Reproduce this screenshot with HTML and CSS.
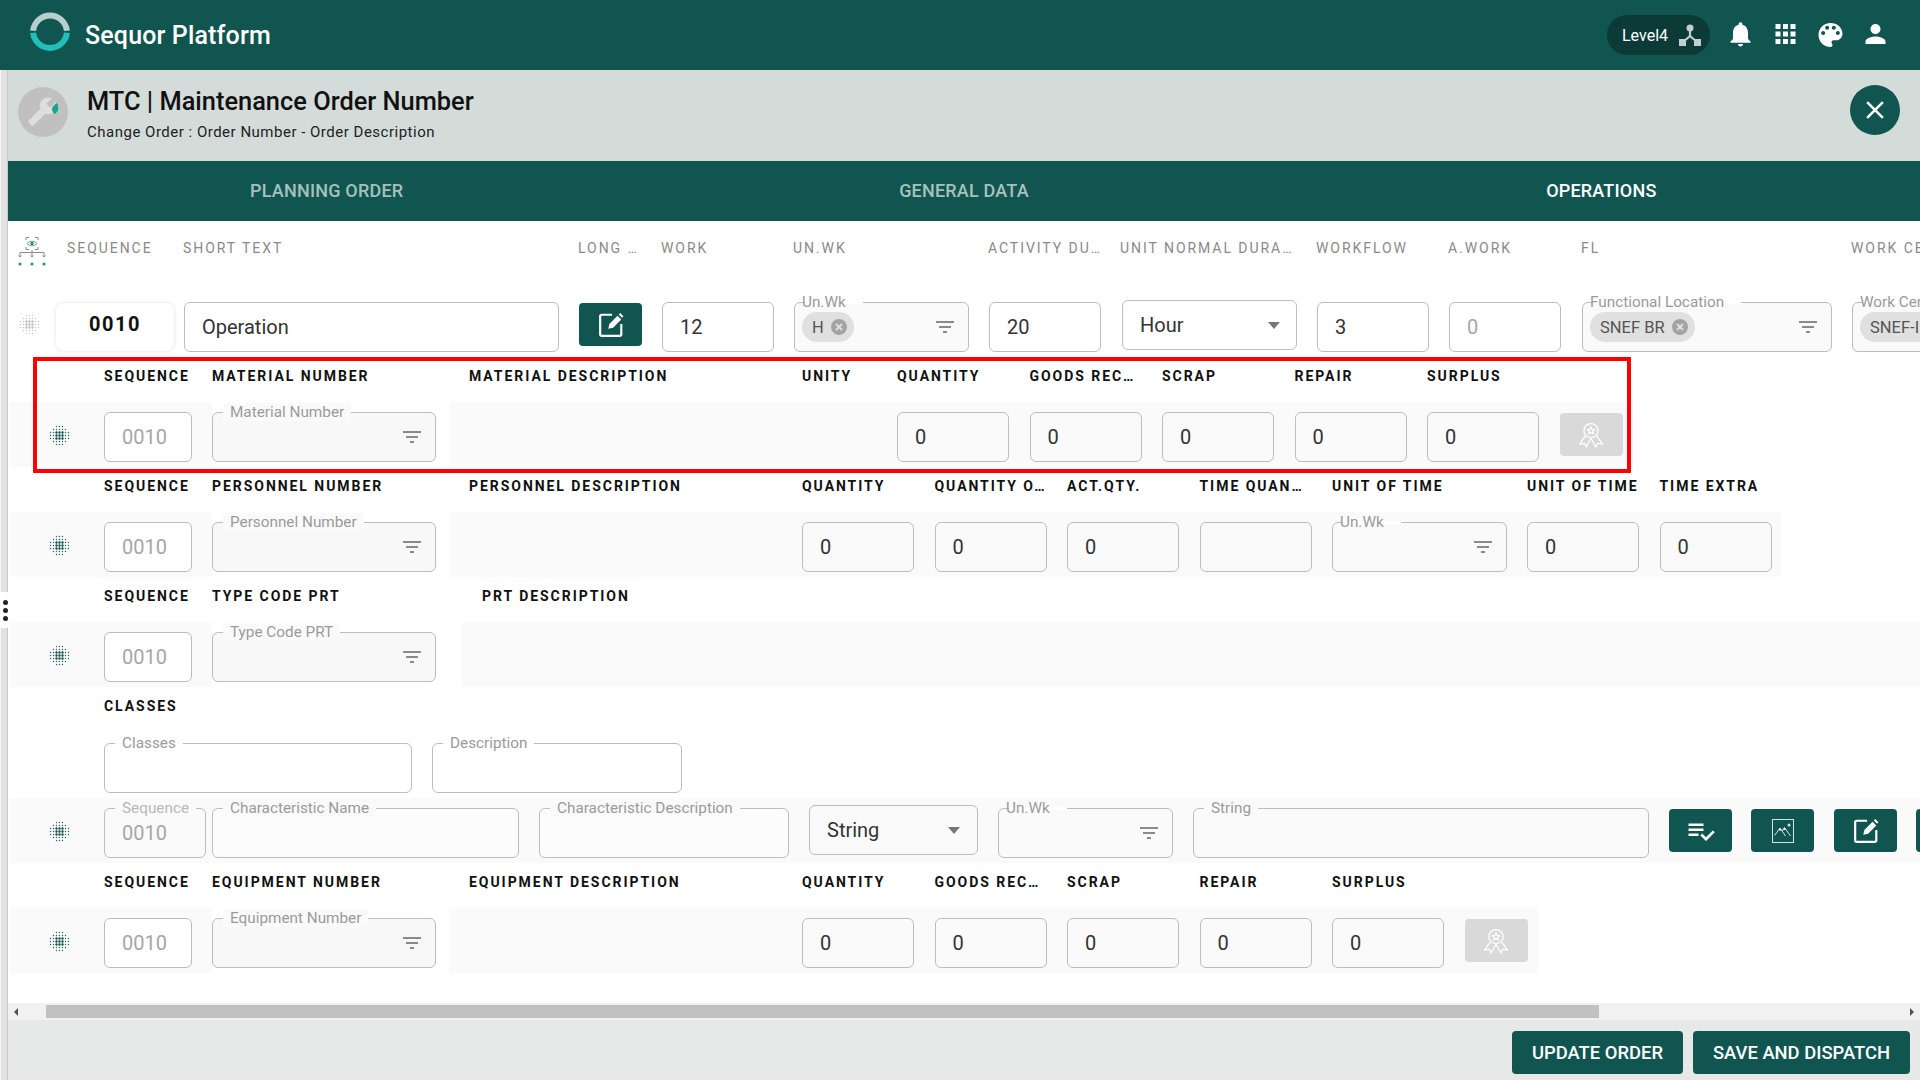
FILE: index.html
```html
<!DOCTYPE html>
<html lang="en">
<head>
<meta charset="utf-8">
<title>Sequor Platform</title>
<link rel="stylesheet" href="styles.css">
</head>
<body>
<svg class="defs" width="0" height="0" aria-hidden="true">
  <symbol id="i-dots" viewBox="0 0 21 21">
    <path d="M1.500 7.500v7M4.500 4.500v13M7.500 1.500v19M10.500 1.500v19M13.500 1.500v19M16.500 4.500v13M19.500 7.500v7" fill="none" stroke="currentColor" stroke-opacity=".9" stroke-width="1.400" stroke-linecap="round" stroke-dasharray="0 3"/>
    <path d="M7.500 7.500v7M10.500 7.500v7M13.500 7.500v7" fill="none" stroke="currentColor" stroke-width="2.400" stroke-linecap="round" stroke-dasharray="0 3"/>
  </symbol>
  <symbol id="i-filter" viewBox="0 0 24 24"><path d="M10 18h4v-2h-4v2zM3 6v2h18V6H3zm3 7h12v-2H6v2z"/></symbol>
  <symbol id="i-edit" viewBox="0 0 24 24">
    <path d="M13 2.500H3.500A1.500 1.500 0 0 0 2 4v16.500A1.500 1.500 0 0 0 3.500 22H20a1.500 1.500 0 0 0 1.500-1.500V11" fill="none" stroke="currentColor" stroke-width="2"/>
    <path d="M9.500 15.500l1-4.500 7.500-7.500 3.500 3.500-7.500 7.500zM19.200 2.300l1.300-1.300 3 3-1.300 1.300z" fill="currentColor"/>
  </symbol>
  <symbol id="i-award" viewBox="0 0 24 24">
    <g fill="none" stroke="currentColor" stroke-width="1.200" stroke-linejoin="round">
      <circle cx="12" cy="8" r="6.500"/>
      <path d="M12 4.500l1 2.300 2.400.2-1.800 1.600.6 2.400-2.200-1.300-2.200 1.300.6-2.400-1.800-1.600 2.400-.2z"/>
      <path d="M7 12.500L1.500 20.500l4.500-.8 1.600 3.400L12 15l4.400 8.100 1.600-3.400 4.500.8L17 12.500"/>
    </g>
  </symbol>
  <symbol id="i-cancel" viewBox="0 0 16 16">
    <circle cx="8" cy="8" r="8" fill="#a3a3a3"/>
    <path d="M5 5l6 6M11 5l-6 6" stroke="#e0e0e0" stroke-width="1.800"/>
  </symbol>
</svg>

<div class="app">
  <header class="topbar">
    <svg class="logo" width="40" height="40" viewBox="0 0 40 40" aria-hidden="true">
      <path d="M3.100 18.700A17 17 0 0 1 36.900 18.700" fill="none" stroke="#b7cfcc" stroke-width="6"/>
      <path d="M3.100 20.800A17 17 0 0 0 36.900 20.800" fill="none" stroke="#20bfb8" stroke-width="6"/>
    </svg>
    <span class="brand">Sequor Platform</span>
    <div class="level-pill">
      <span>Level4</span>
      <svg width="22" height="22" viewBox="0 0 22 22" aria-hidden="true">
        <circle cx="11" cy="4" r="3.500" fill="#c3cfcc"/>
        <path d="M11 6v6L4 18M11 12l7 6" fill="none" stroke="#c3cfcc" stroke-width="2.200"/>
        <rect x="0" y="15" width="7" height="7" fill="#c3cfcc"/><rect x="15" y="15" width="7" height="7" fill="#c3cfcc"/>
      </svg>
    </div>
    <nav class="top-icons">
      <svg class="top-icon" viewBox="0 0 24 24" aria-hidden="true"><path d="M12 22c1.100 0 2-.9 2-2h-4c0 1.100.89 2 2 2zm6-6v-5c0-3.070-1.640-5.640-4.500-6.320V4c0-.83-.67-1.500-1.500-1.500s-1.500.67-1.500 1.500v.68C7.630 5.360 6 7.920 6 11v5l-2 2v1h16v-1l-2-2z"/></svg>
      <svg class="top-icon" viewBox="0 0 24 24" aria-hidden="true"><path d="M4 8h4V4H4v4zm6 12h4v-4h-4v4zm-6 0h4v-4H4v4zm0-6h4v-4H4v4zm6 0h4v-4h-4v4zm6-10v4h4V4h-4zm-6 4h4V4h-4v4zm6 6h4v-4h-4v4zm0 6h4v-4h-4v4z"/></svg>
      <svg class="top-icon palette" viewBox="0 0 24 24" aria-hidden="true"><path d="M12 3c-4.970 0-9 4.030-9 9s4.030 9 9 9c.83 0 1.500-.67 1.500-1.500 0-.39-.15-.74-.39-1.010-.23-.26-.38-.61-.38-.99 0-.83.67-1.500 1.500-1.500H16c2.760 0 5-2.240 5-5 0-4.420-4.030-8-9-8zm-5.500 9c-.83 0-1.500-.67-1.500-1.500S5.670 9 6.500 9 8 9.670 8 10.500 7.330 12 6.500 12zm3-4C8.670 8 8 7.330 8 6.500S8.670 5 9.500 5s1.500.67 1.500 1.500S10.330 8 9.500 8zm5 0c-.83 0-1.500-.67-1.500-1.500S13.670 5 14.500 5s1.500.67 1.500 1.500S15.330 8 14.500 8zm3 4c-.83 0-1.500-.67-1.500-1.500S16.670 9 17.500 9s1.500.67 1.500 1.500-.67 1.500-1.500 1.500z"/></svg>
      <svg class="top-icon" viewBox="0 0 24 24" aria-hidden="true"><path d="M12 12c2.210 0 4-1.790 4-4s-1.790-4-4-4-4 1.790-4 4 1.790 4 4 4zm0 2c-2.670 0-8 1.340-8 4v2h16v-2c0-2.660-5.330-4-8-4z"/></svg>
    </nav>
  </header>

  <div class="workspace">
    <aside class="rail"><span class="rail-handle"><i></i><i></i><i></i></span></aside>
    <main class="panel">
      <div class="page-head">
        <svg class="avatar" width="50" height="50" viewBox="0 0 50 50" aria-hidden="true">
          <circle cx="25" cy="25" r="25" fill="#c0c0c0"/>
          <g transform="translate(40 9) scale(-1.300 1.300)"><path d="M22.700 19l-9.100-9.100c.9-2.300.4-5-1.500-6.900-2-2-5-2.400-7.400-1.300L9 6 6 9 1.600 4.700C.4 7.100.9 10.100 2.900 12.100c1.900 1.900 4.600 2.400 6.900 1.500l9.100 9.100c.4.4 1 .4 1.400 0l2.300-2.300c.5-.4.5-1.100.1-1.400z" fill="#dedede"/></g>
          <path d="M39 16c-3 2-5 4-5 6s1 4 3 5c2-2 4-4 3-7 0-2 0-3-1-4z" fill="#0fa88c"/>
        </svg>
        <div class="page-titles">
          <h1>MTC | Maintenance Order Number</h1>
          <p>Change Order : Order Number - Order Description</p>
        </div>
        <button class="close-btn" aria-label="Close">
          <svg width="30" height="30" viewBox="0 0 24 24" aria-hidden="true"><path d="M19 6.410L17.590 5 12 10.590 6.410 5 5 6.410 10.590 12 5 17.590 6.410 19 12 13.410 17.590 19 19 17.590 13.410 12z"/></svg>
        </button>
      </div>

      <div class="tabs">
        <span class="tab">PLANNING ORDER</span>
        <span class="tab">GENERAL DATA</span>
        <span class="tab is-active">OPERATIONS</span>
      </div>

      <div class="scroller">
        <div class="op-head">
          <svg class="tree-icon" width="28" height="30" viewBox="0 0 28 30" aria-hidden="true">
            <g fill="none" stroke="#8a8a8a" stroke-width="1">
              <path d="M8 3V.5h3M17 .5h3V3M8 10v2.500h3M17 12.500h3V10"/>
              <path d="M9 6.500c3-3 7-3 10 0-3 3-7 3-10 0z"/>
              <path d="M14 13v5M2 20v-4.500h24V20M14 18v2M.5 18.500L2 20l1.500-1.500M12.500 18.500L14 20l1.500-1.500M24.500 18.500L26 20l1.500-1.500"/>
            </g>
            <circle cx="14" cy="6.500" r="1.800" fill="#1a9c8c"/>
            <circle cx="2" cy="27" r="1.600" fill="#1a9c8c"/><circle cx="14" cy="27" r="1.600" fill="#1a9c8c"/><circle cx="26" cy="27" r="1.600" fill="#1a9c8c"/>
          </svg>
          <span>SEQUENCE</span><span>SHORT TEXT</span><span>LONG …</span><span>WORK</span><span>UN.WK</span><span>ACTIVITY DU…</span><span>UNIT NORMAL DURA…</span><span>WORKFLOW</span><span>A.WORK</span><span>FL</span><span>WORK CENTER</span>
        </div>

        <div class="op-row">
          <svg class="drag drag-muted"><use href="#i-dots"/></svg>
          <div class="seq-card">0010</div>
          <div class="field w-short">Operation</div>
          <button class="act-btn"><svg class="ico26"><use href="#i-edit"/></svg></button>
          <div class="field w-num">12</div>
          <div class="field w-pick is-tinted has-chip">
            <span class="legend legend-shift">Un.Wk</span>
            <span class="chip">H <svg class="chip-x"><use href="#i-cancel"/></svg></span>
            <svg class="filter"><use href="#i-filter"/></svg>
          </div>
          <div class="field w-num">20</div>
          <div class="field w-pick is-select">Hour<i class="caret"></i></div>
          <div class="field w-num">3</div>
          <div class="field w-num is-muted">0</div>
          <div class="field w-loc is-tinted has-chip">
            <span class="legend legend-shift">Functional Location</span>
            <span class="chip">SNEF BR <svg class="chip-x"><use href="#i-cancel"/></svg></span>
            <svg class="filter"><use href="#i-filter"/></svg>
          </div>
          <div class="field w-loc is-tinted has-chip">
            <span class="legend legend-shift">Work Center</span>
            <span class="chip">SNEF-I <svg class="chip-x"><use href="#i-cancel"/></svg></span>
          </div>
        </div>

        <section class="sub cols-material">
          <div class="labels"><span>SEQUENCE</span><span>MATERIAL NUMBER</span><span>MATERIAL DESCRIPTION</span><span>UNITY</span><span>QUANTITY</span><span>GOODS REC…</span><span>SCRAP</span><span>REPAIR</span><span>SURPLUS</span></div>
          <div class="fields">
            <svg class="drag"><use href="#i-dots"/></svg>
            <div class="field w-seq is-muted">0010</div>
            <div class="cell-plain"><div class="field w-lookup is-tinted"><span class="legend">Material Number</span><svg class="filter"><use href="#i-filter"/></svg></div></div>
            <span></span><span></span>
            <div class="field w-num is-tinted">0</div>
            <div class="field w-num is-tinted">0</div>
            <div class="field w-num is-tinted">0</div>
            <div class="field w-num is-tinted">0</div>
            <div class="field w-num is-tinted">0</div>
            <button class="act-btn is-off"><svg class="ico26"><use href="#i-award"/></svg></button>
          </div>
        </section>

        <section class="sub cols-personnel">
          <div class="labels"><span>SEQUENCE</span><span>PERSONNEL NUMBER</span><span>PERSONNEL DESCRIPTION</span><span>QUANTITY</span><span>QUANTITY O…</span><span>ACT.QTY.</span><span>TIME QUAN…</span><span>UNIT OF TIME</span><span>UNIT OF TIME</span><span>TIME EXTRA</span></div>
          <div class="fields">
            <svg class="drag"><use href="#i-dots"/></svg>
            <div class="field w-seq is-muted">0010</div>
            <div class="cell-plain"><div class="field w-lookup is-tinted"><span class="legend">Personnel Number</span><svg class="filter"><use href="#i-filter"/></svg></div></div>
            <span></span>
            <div class="field w-num is-tinted">0</div>
            <div class="field w-num is-tinted">0</div>
            <div class="field w-num is-tinted">0</div>
            <div class="field w-num is-tinted"></div>
            <div class="field w-pick is-tinted"><span class="legend legend-shift">Un.Wk</span><svg class="filter"><use href="#i-filter"/></svg></div>
            <div class="field w-num is-tinted">0</div>
            <div class="field w-num is-tinted">0</div>
          </div>
        </section>

        <section class="sub cols-prt">
          <div class="labels"><span>SEQUENCE</span><span>TYPE CODE PRT</span><span>PRT DESCRIPTION</span></div>
          <div class="fields">
            <svg class="drag"><use href="#i-dots"/></svg>
            <div class="field w-seq is-muted">0010</div>
            <div class="cell-plain cell-wide"><div class="field w-lookup is-tinted"><span class="legend">Type Code PRT</span><svg class="filter"><use href="#i-filter"/></svg></div></div>
          </div>
        </section>

        <section class="sub cols-classes">
          <div class="labels"><span>CLASSES</span></div>
          <div class="fields class-fields">
            <span></span>
            <div class="field w-class is-white"><span class="legend legend-white">Classes</span></div>
            <div class="field w-desc is-white"><span class="legend legend-white">Description</span></div>
          </div>
          <div class="fields cols-char">
            <svg class="drag"><use href="#i-dots"/></svg>
            <div class="field w-seqwide is-muted is-tinted"><span class="legend legend-faint">Sequence</span>0010</div>
            <div class="field w-charname is-white-soft"><span class="legend">Characteristic Name</span></div>
            <div class="field w-desc is-white-soft"><span class="legend">Characteristic Description</span></div>
            <div class="field w-type is-tinted is-select">String<i class="caret"></i></div>
            <div class="field w-pick is-tinted"><span class="legend legend-shift">Un.Wk</span><svg class="filter"><use href="#i-filter"/></svg></div>
            <div class="field w-string is-tinted"><span class="legend">String</span></div>
            <button class="act-btn">
              <svg class="ico30" viewBox="0 0 24 24"><path fill="currentColor" d="M14 10H2v2h12v-2zm0-4H2v2h12V6zM2 16h8v-2H2v2zm19.500-4.500L23 13l-6.990 7-4.510-4.500L13 14l3.010 3 5.490-5.500z"/></svg>
            </button>
            <button class="act-btn">
              <svg class="ico24" viewBox="0 0 24 24"><g fill="none" stroke="#d5e3e0" stroke-width="1"><rect x="1.500" y=".5" width="21" height="23"/><path d="M3.500 16.500l5.500-7.500 5.500 8M11 12l2.500-3.500 6 8.500"/></g><circle cx="18" cy="6" r="1.500" fill="#d5e3e0"/><path d="M9 9L7.500 11.500h3zM13.500 8.500L12 11h3z" fill="#fff"/></svg>
            </button>
            <button class="act-btn"><svg class="ico26"><use href="#i-edit"/></svg></button>
            <button class="act-btn"></button>
          </div>
        </section>

        <section class="sub cols-equipment">
          <div class="labels"><span>SEQUENCE</span><span>EQUIPMENT NUMBER</span><span>EQUIPMENT DESCRIPTION</span><span>QUANTITY</span><span>GOODS REC…</span><span>SCRAP</span><span>REPAIR</span><span>SURPLUS</span></div>
          <div class="fields">
            <svg class="drag"><use href="#i-dots"/></svg>
            <div class="field w-seq is-muted">0010</div>
            <div class="cell-plain"><div class="field w-lookup is-tinted"><span class="legend">Equipment Number</span><svg class="filter"><use href="#i-filter"/></svg></div></div>
            <span></span>
            <div class="field w-num is-tinted">0</div>
            <div class="field w-num is-tinted">0</div>
            <div class="field w-num is-tinted">0</div>
            <div class="field w-num is-tinted">0</div>
            <div class="field w-num is-tinted">0</div>
            <button class="act-btn is-off"><svg class="ico26"><use href="#i-award"/></svg></button>
          </div>
        </section>
      </div>

      <div class="hscroll"><i class="arrow arrow-l"></i><span class="thumb"></span><i class="arrow arrow-r"></i></div>

      <footer class="foot">
        <button class="foot-btn">UPDATE ORDER</button>
        <button class="foot-btn">SAVE AND DISPATCH</button>
      </footer>
    </main>
  </div>

  <div class="callout"></div>
</div>
</body>
</html>
```
FILE: styles.css
```css
* { box-sizing: border-box; }
html, body { margin: 0; height: 100%; overflow: hidden; }
body { font-family: Roboto, "Noto Sans", sans-serif; color: #222; background: #fff; }
.defs { position: absolute; }
button { font-family: inherit; border: 0; padding: 0; }

.app { position: relative; display: flex; flex-direction: column; height: 1080px; overflow: hidden; }

/* top bar */
.topbar { flex: none; height: 70px; background: #115550; display: flex; align-items: center; padding: 0 22.5px 0 30px; }
.logo { flex: none; margin-bottom: 6px; }
.brand { margin-left: 15px; font-size: 25px; letter-spacing: .15px; font-weight: 500; color: #fff; }
.level-pill { margin-left: auto; width: 103px; height: 40px; border-radius: 20px; background: #0c3b37; display: flex; align-items: center; gap: 11px; padding-left: 15px; color: #fff; font-size: 16px; }
.top-icons { margin-left: 7.5px; display: flex; }
.top-icon { width: 45px; height: 30px; fill: #fff; }
.palette { height: 32px; }

/* shell */
.workspace { flex: 1; display: flex; min-height: 0; }
.rail { flex: none; width: 8px; position: relative; background: #e3e3e3; border-left: 1px solid #f6f6f6; border-right: 1px solid #c8c8c8; }
.rail-handle { position: absolute; left: -1px; top: 522px; width: 11px; height: 36px; background: #fff; border-radius: 0 5px 5px 0; display: flex; flex-direction: column; justify-content: center; align-items: center; gap: 3px; padding-right: 1px; }
.rail-handle i { width: 5px; height: 5px; border-radius: 50%; background: #222; }
.panel { flex: 1; min-width: 0; display: flex; flex-direction: column; }

.page-head { flex: none; height: 91px; background: #d4dcd9; display: flex; align-items: center; padding: 0 20px 0 10px; }
.avatar { flex: none; margin-bottom: 7px; }
.page-titles { margin-left: 19px; margin-bottom: 4px; }
.page-titles h1 { margin: 0; font-size: 25.4px; line-height: 30px; font-weight: 500; color: #111; }
.page-titles p { margin: 7px 0 0; font-size: 15px; letter-spacing: .5px; line-height: 18px; color: #222; }
.close-btn { margin-left: auto; margin-bottom: 12px; width: 50px; height: 50px; border-radius: 50%; background: #115550; fill: #fff; display: flex; align-items: center; justify-content: center; }

.tabs { flex: none; height: 60px; background: #115550; display: grid; grid-template-columns: repeat(3, 1fr); }
.tab { display: flex; align-items: center; justify-content: center; padding-bottom: 2px; font-size: 18px; letter-spacing: .2px; font-weight: 500; color: #a6c1bc; }
.tab.is-active { color: #fff; }

/* scrolling area */
.scroller { flex: 1; min-height: 0; overflow: hidden; background: #fff; }

.op-head { height: 52px; padding-top: 1px; display: grid; align-items: center; grid-template-columns: 59px 116px 395px 83px 132px 195px 132px 196px 132px 133px 270px 200px; font-size: 14px; letter-spacing: 1.95px; color: #8a8a8a; white-space: nowrap; }
.tree-icon { margin-left: 10px; margin-top: 9px; }

.op-row { height: 84px; padding-top: 29px; display: grid; align-items: start; grid-template-columns: 48px 128px 395px 83px 132px 195px 133px 195px 132px 133px 270px 260px; }

.sub { margin-left: 2px; }
.labels, .fields { display: grid; }
.labels { height: 37px; line-height: 39px; margin-bottom: 8px; font-size: 14px; font-weight: 700; letter-spacing: 1.95px; color: #111; white-space: nowrap; }
.labels > :first-child { grid-column: 2; }
.fields { height: 65px; padding-top: 10px; background: #fafafa; align-items: start; }

.cols-material .labels, .cols-material .fields { width: fit-content; padding-right: 10px; grid-template-columns: 94px 108px 257px 333px 95px 132.500px 132.500px 132.500px 132.500px 132.500px 63px; }
.cols-personnel .labels, .cols-personnel .fields { width: fit-content; padding-right: 9px; grid-template-columns: 94px 108px 257px 333px 132.500px 132.500px 132.500px 132.500px 195px 132.500px 112px; }
.cols-equipment .labels, .cols-equipment .fields { width: fit-content; padding-right: 10px; grid-template-columns: 94px 108px 257px 333px 132.500px 132.500px 132.500px 132.500px 132.500px 63px; }
.cols-prt .labels, .cols-prt .fields { grid-template-columns: 94px 108px 270px 1fr; }
.cols-classes .labels { grid-template-columns: 94px 400px; }
.class-fields { height: 66px; padding-top: 11px; background: transparent; grid-template-columns: 94px 328px 260px; }
.fields.cols-char { grid-template-columns: 94px 108px 327px 270px 189px 195px 476px 82px 83px 82px 82px; }

/* white gap behind lookup fields */
.cell-plain { width: 237px; height: 65px; margin-top: -10px; padding-top: 10px; background: #fff; }
.cell-wide { width: 250px; }

/* form controls */
.field { position: relative; z-index: 0; height: 50px; border: 1px solid #bdbdbd; border-radius: 6px; background: #fff; display: flex; align-items: center; justify-content: space-between; padding: 0 17px; font-size: 20px; color: #333; white-space: nowrap; }
.is-tinted { background: #fafafa; }
.is-white-soft { background: #fcfcfc; }
.is-muted { color: #a6a6a6; }
.w-seq { width: 88px; }
.w-seqwide { width: 102px; }
.w-short { width: 375px; }
.w-num { width: 112px; }
.w-pick { width: 175px; }
.w-loc { width: 250px; }
.w-lookup { width: 224px; background: #f8f8f8; }
.w-class { width: 308px; }
.w-desc { width: 250px; }
.w-charname { width: 307px; }
.w-type { width: 169px; }
.w-string { width: 456px; }
.is-select { margin-top: -3px; padding-right: 17px; }
.op-row .is-select { margin-top: -2px; }
.has-chip { padding-left: 7px; }
.w-lookup, .w-pick, .w-loc { padding-right: 11px; }
.w-pick.is-select { padding-right: 16px; }

.legend { position: absolute; left: 10px; top: -10px; height: 18px; line-height: 18px; padding: 0 7px; font-size: 15.3px; color: #9a9a9a; background: #fafafa; }
.legend-white { background: #fff; }
.legend-faint { color: #b8b8b8; }
.legend-shift { left: 7px; padding: 0; background: none; }
.legend-shift::before { content: ""; position: absolute; z-index: -1; left: 3px; right: -17px; top: 8px; height: 3px; background: #fff; }

.filter { margin-left: auto; flex: none; width: 24px; height: 24px; fill: #8a8a8a; }
.caret { width: 0; height: 0; border-left: 6.5px solid transparent; border-right: 6.5px solid transparent; border-top: 7px solid #777; }

.chip { height: 30px; margin-top: 0; border-radius: 15px; background: #e0e0e0; display: flex; align-items: center; gap: 7px; padding: 0 7px 0 10px; font-size: 16.5px; color: #555; }
.chip-x { width: 16px; height: 16px; }

.seq-card { width: 118px; height: 48px; margin-top: 1px; border-radius: 8px; background: #fff; box-shadow: 0 0 4px rgba(0, 0, 0, .12); display: flex; align-items: center; justify-content: center; padding-bottom: 6px; font-size: 20px; font-weight: 700; letter-spacing: 1.5px; color: #111; }

.drag { width: 21px; height: 21px; margin: 13px 0 0 39px; color: #11544f; }
.drag-muted { margin: 12px 0 0 11px; color: #c0c0c0; }

.act-btn { width: 63px; height: 43px; margin-top: 1px; border-radius: 4px; background: #115550; color: #fff; display: flex; align-items: center; justify-content: center; }
.act-btn.is-off { background: #d9d9d9; }
.ico24 { width: 24px; height: 24px; }
.ico26 { width: 26px; height: 26px; }
.ico30 { width: 30px; height: 30px; }

/* fake horizontal scrollbar */
.hscroll { flex: none; height: 17px; background: #f1f1f1; display: flex; align-items: center; }
.arrow { width: 0; height: 0; border-top: 4px solid transparent; border-bottom: 4px solid transparent; }
.arrow-l { margin-left: 6px; border-right: 4px solid #505050; }
.arrow-r { margin-left: auto; margin-right: 6px; border-left: 4px solid #505050; }
.thumb { width: 1553px; height: 13px; margin-left: 28px; background: #c1c1c1; }

.foot { flex: none; height: 60px; background: #e7e9e8; display: flex; justify-content: flex-end; gap: 10px; padding: 11px 10px 0 0; }
.foot-btn { height: 43px; padding: 0 20px; border-radius: 4px; background: #115550; color: #fff; font-size: 18.4px; font-weight: 500; }

.callout { position: absolute; left: 33px; top: 357px; width: 1598px; height: 116px; border: 4px solid #f00; pointer-events: none; }
```
